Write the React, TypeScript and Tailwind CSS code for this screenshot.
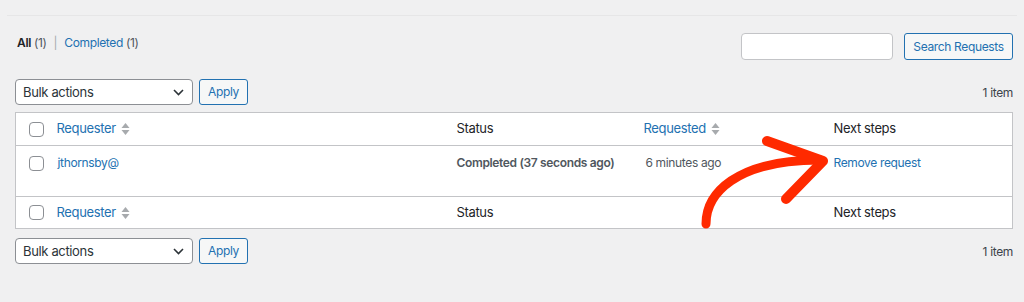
import React from "react";

const font = { fontFamily: "Inter, 'Noto Sans', sans-serif" };

function SortIcon() {
  return (
    <svg width="9" height="14" viewBox="0 0 9 14" className="ml-[5px] inline-block">
      <path d="M4.5 1 L8.5 6 L0.5 6 Z" fill="#a7aaad" />
      <path d="M0.5 8 L8.5 8 L4.5 13 Z" fill="#a7aaad" />
    </svg>
  );
}

function Checkbox() {
  return <span className="block w-[15px] h-[15px] rounded-[4px] border border-[#8c8f94] bg-white" />;
}

function BulkActions() {
  return (
    <div className="flex items-center gap-[6px]">
      <div className="w-[178px] h-[26px] rounded-[4px] border border-[#8c8f94] bg-white flex items-center justify-between pl-[7px] pr-[8px] text-[13px] text-[#2c3338]">
        <span className="pt-px">Bulk actions</span>
        <svg width="11" height="7" viewBox="0 0 11 7">
          <path d="M1 1 L5.5 5.5 L10 1" fill="none" stroke="#2c3338" strokeWidth="1.6" />
        </svg>
      </div>
      <button className="w-[49px] h-[26px] rounded-[3px] border border-[#2271b1] bg-[#f6f7f7] text-[12px] text-[#2271b1]">
        Apply
      </button>
    </div>
  );
}

function HeaderCells({ footer }: { footer?: boolean }) {
  return (
    <>
      <th className="pl-[13px] w-[33px] font-normal text-left">
        <Checkbox />
      </th>
      <th className="pl-[8px] w-[400px] font-normal text-left text-[#2271b1]">
        <span className="inline-flex items-center">
          Requester
          <SortIcon />
        </span>
      </th>
      <th className="pl-[8px] w-[187px] font-normal text-left text-[#1d2327]">Status</th>
      <th className="pl-[8px] w-[190px] font-normal text-left text-[#2271b1]">
        {!footer && (
          <span className="inline-flex items-center">
            Requested
            <SortIcon />
          </span>
        )}
      </th>
      <th className="pl-[8px] font-normal text-left text-[#1d2327]">Next steps</th>
    </>
  );
}

export default function App() {
  return (
    <div className="relative w-[1024px] h-[302px] overflow-hidden bg-[#f0f0f1] tracking-[-0.35px]" style={font}>
      <div className="pt-[15px] px-[7px]">
        <div className="h-px bg-[#e6e6e7]" />
      </div>

      <div className="pl-[15px] pr-[11px]">
        <div className="mt-[17px] flex justify-between">
          <div className="pl-[2px] leading-5 text-[12px] text-[#50575e]">
            <span className="font-semibold text-[#1d2327]">All</span> (1)
            <span className="mx-[7px] text-[#a7aaad]">|</span>
            <span className="text-[#2271b1]">Completed</span> (1)
          </div>
          <div className="flex items-center gap-[11px]">
            <div className="w-[152px] h-[27px] rounded-[4px] border border-[#c3c4c7] bg-white" />
            <button className="w-[109px] h-[27px] rounded-[3px] border border-[#2271b1] bg-[#f6f7f7] text-[12px] text-[#2271b1]">
              Search Requests
            </button>
          </div>
        </div>

        <div className="mt-[19px] flex items-center justify-between">
          <BulkActions />
          <span className="pt-[2px] text-[12px] text-[#3c434a]">1 item</span>
        </div>

        <table className="mt-[7px] w-[998px] table-fixed border-collapse border border-[#c3c4c7] bg-white text-[13px]">
          <thead>
            <tr className="h-[33px] border-b border-[#c3c4c7]">
              <HeaderCells />
            </tr>
          </thead>
          <tbody>
            <tr className="h-[51px] border-b border-[#c3c4c7] align-top text-[12px]">
              <td className="pl-[13px] pt-[10px]">
                <Checkbox />
              </td>
              <td className="pl-[9px] pt-[8px] text-[#2271b1]">jthornsby@</td>
              <td className="pl-[8px] pt-[8px] font-semibold text-[#50575e]">Completed (37 seconds ago)</td>
              <td className="pl-[10px] pt-[8px] text-[#50575e]">6 minutes ago</td>
              <td className="pl-[8px] pt-[8px] text-[#2271b1]">Remove request</td>
            </tr>
          </tbody>
          <tfoot>
            <tr className="h-[32px]">
              <HeaderCells footer />
            </tr>
          </tfoot>
        </table>

        <div className="mt-[9px] flex items-center justify-between">
          <BulkActions />
          <span className="pt-[2px] text-[12px] text-[#3c434a]">1 item</span>
        </div>
      </div>

      <svg className="absolute left-0 top-0 pointer-events-none" width="1024" height="302" viewBox="0 0 1024 302">
        <path
          d="M706 224 C706 194 735 160 820 160"
          fill="none"
          stroke="#ff2a00"
          strokeWidth="9"
          strokeLinecap="round"
        />
        <path
          d="M767 141 L823 161 L786 199"
          fill="none"
          stroke="#ff2a00"
          strokeWidth="10"
          strokeLinecap="round"
          strokeLinejoin="round"
        />
      </svg>
    </div>
  );
}
